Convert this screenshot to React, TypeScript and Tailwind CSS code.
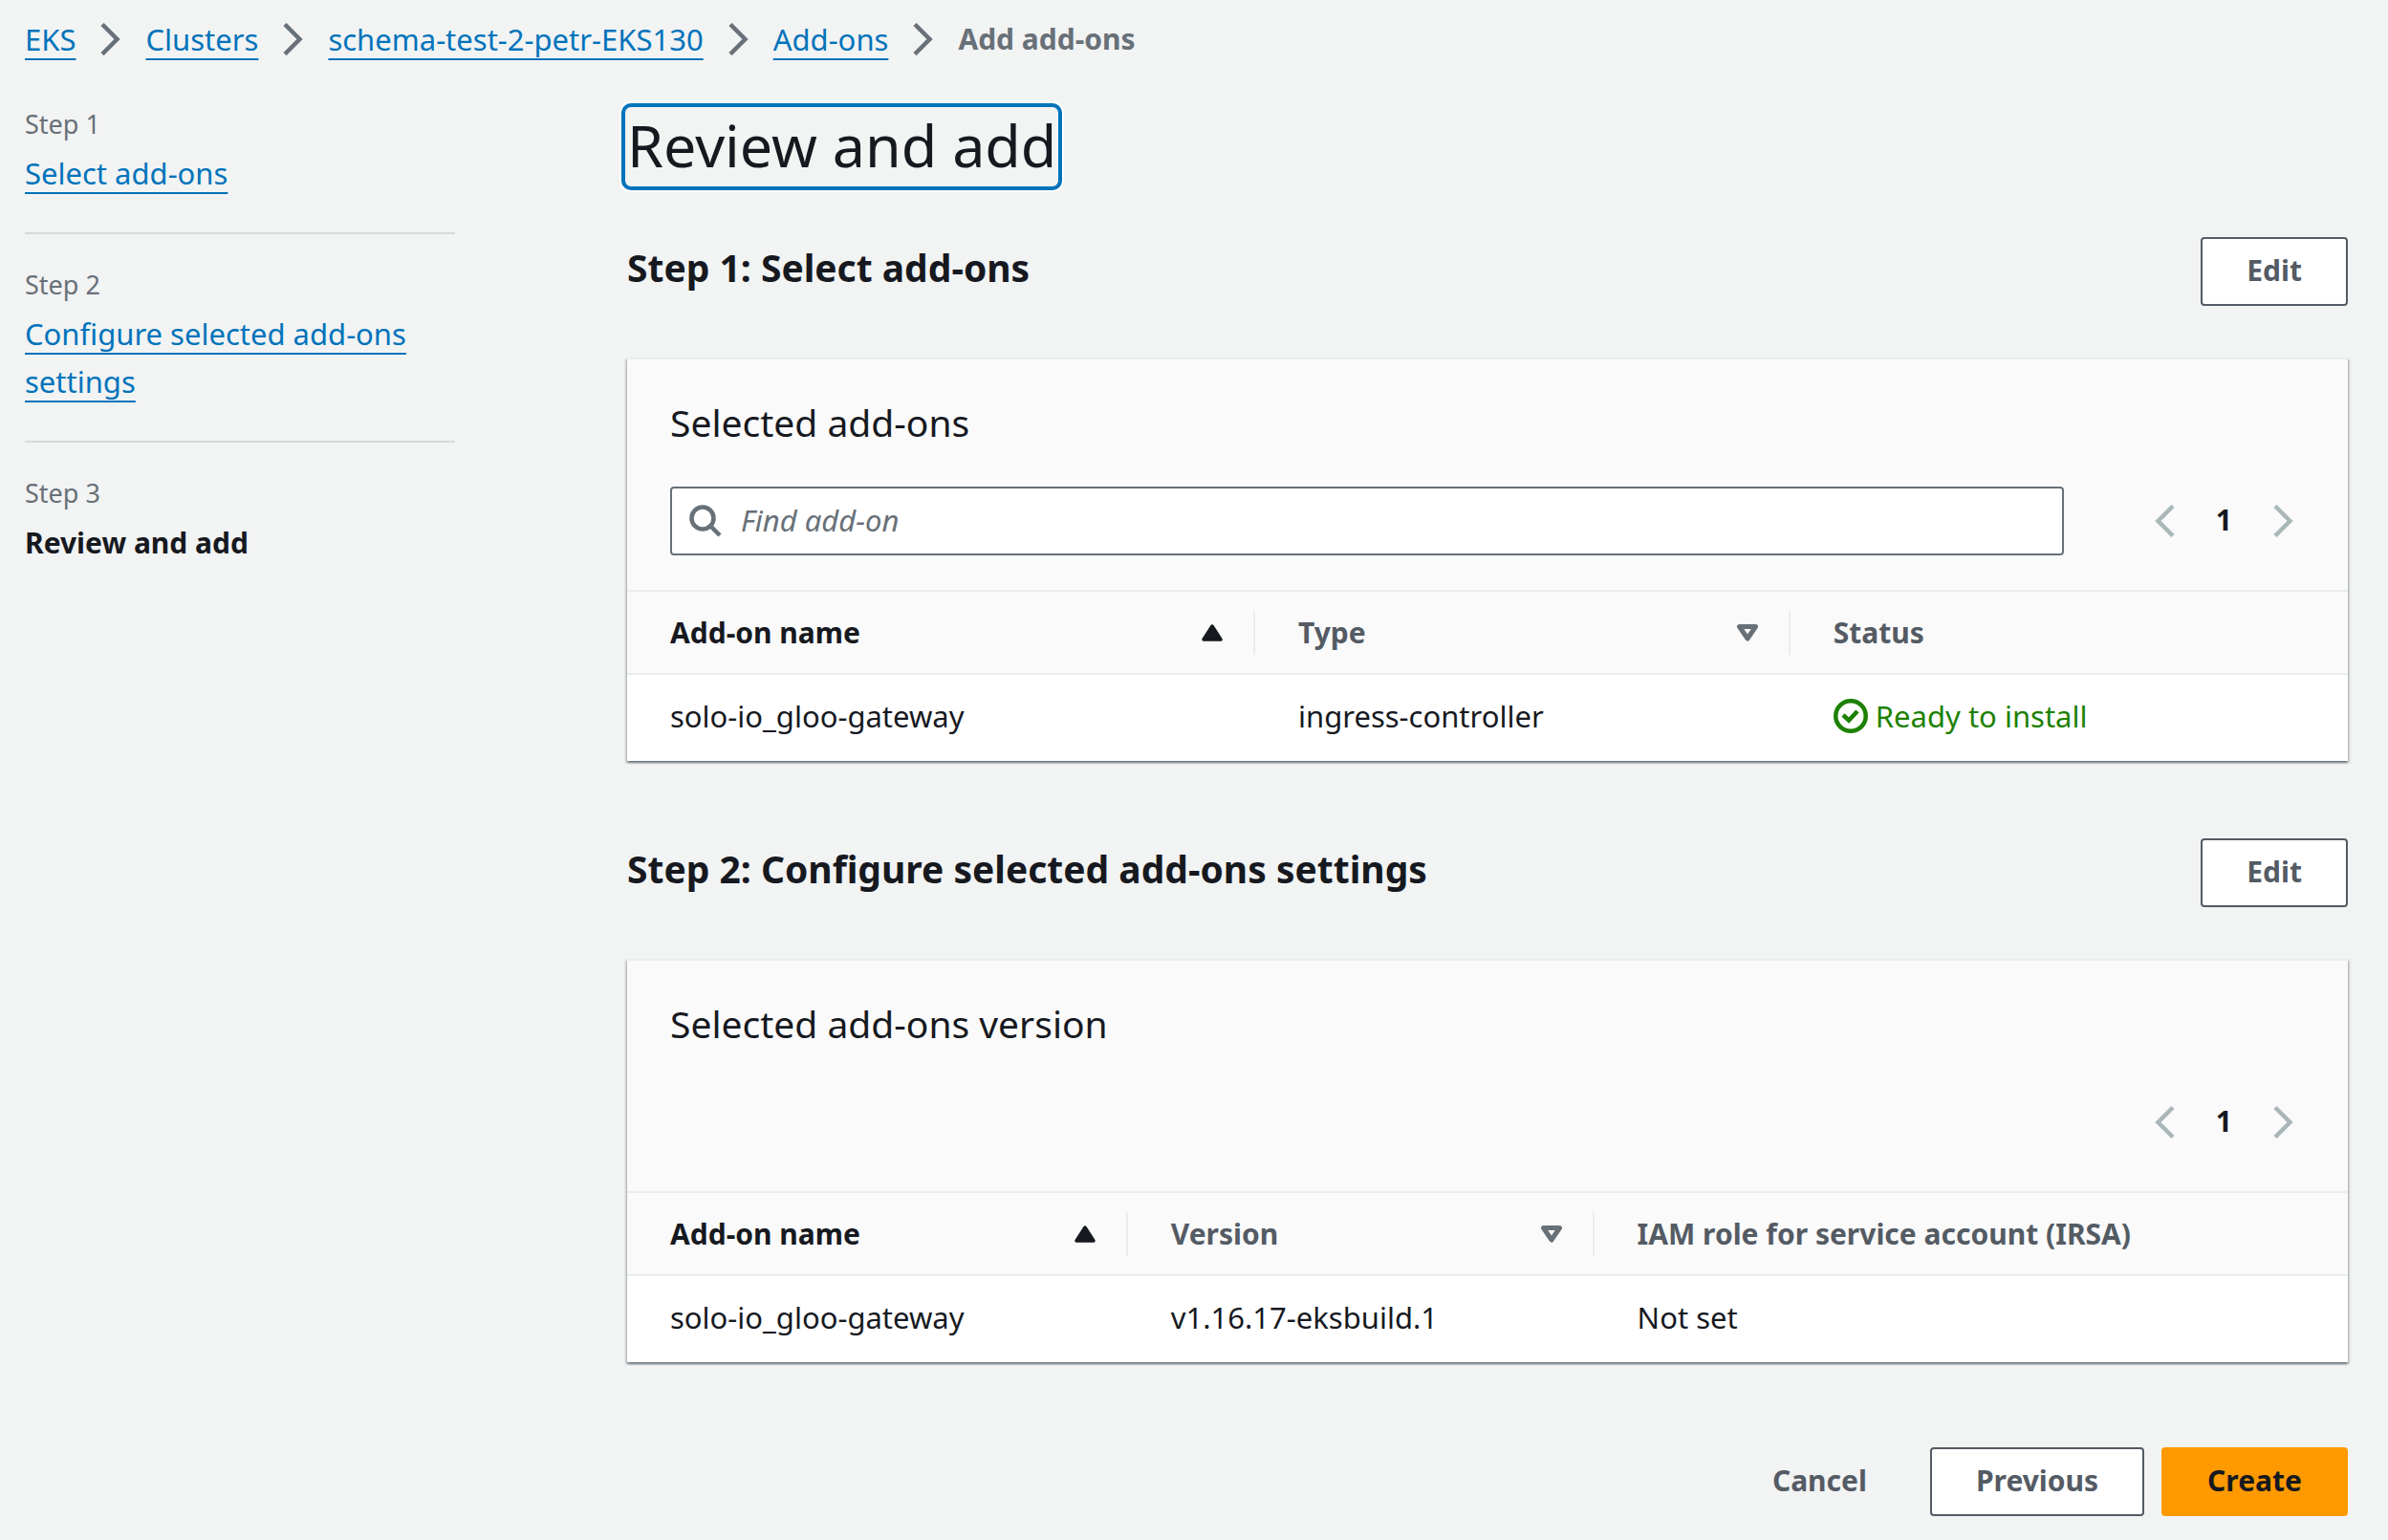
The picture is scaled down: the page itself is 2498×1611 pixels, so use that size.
import type { ReactNode } from 'react'
import { useState } from 'react'

interface Column {
  label: string
  width?: string
  sort?: 'asc' | 'none'
}

interface StepSectionProps {
  title: string
  children: ReactNode
}

interface AddonTableProps {
  title: string
  columns: Column[]
  rows: ReactNode[][]
  search?: ReactNode
}

const breadcrumbs = ['EKS', 'Clusters', 'schema-test-2-petr-EKS130', 'Add-ons']

const steps = [
  { label: 'Step 1', title: 'Select add-ons' },
  { label: 'Step 2', title: 'Configure selected add-ons settings' },
  { label: 'Step 3', title: 'Review and add', current: true },
]

const linkClass =
  'text-[#0073bb] underline decoration-2 underline-offset-8 [text-decoration-skip-ink:none]'

const ChevronRight = ({ className }: { className: string }) => (
  <svg viewBox="0 0 21 34" className={`h-[34px] w-[21px] shrink-0 ${className}`} fill="none" aria-hidden="true">
    <path d="M2 1.5 L17.5 17 L2 32.5" stroke="currentColor" strokeWidth="4.5" />
  </svg>
)

const ChevronLeft = ({ className }: { className: string }) => (
  <svg viewBox="0 0 21 34" className={`h-[34px] w-[21px] shrink-0 ${className}`} fill="none" aria-hidden="true">
    <path d="M19 1.5 L3.5 17 L19 32.5" stroke="currentColor" strokeWidth="4.5" />
  </svg>
)

const SortIcon = ({ sort }: { sort: 'asc' | 'none' }) => (
  <svg viewBox="0 0 24 20" className="h-5 w-6 shrink-0" aria-hidden="true">
    {sort === 'asc' ? (
      <path d="M12 3 L21 17 H3 Z" fill="#16191f" stroke="#16191f" strokeWidth="3.5" strokeLinejoin="round" />
    ) : (
      <path d="M3.5 3.5 H20.5 L12 16 Z" fill="none" stroke="#687078" strokeWidth="5" strokeLinejoin="round" />
    )}
  </svg>
)

const SearchIcon = () => (
  <svg viewBox="0 0 34 34" className="h-[34px] w-[34px] shrink-0 text-[#687078]" fill="none" aria-hidden="true">
    <circle cx="14" cy="14" r="11.5" stroke="currentColor" strokeWidth="4.5" />
    <path d="M22.5 22.5 L32 32" stroke="currentColor" strokeWidth="4.5" />
  </svg>
)

const SuccessIcon = () => (
  <svg viewBox="0 0 36 36" className="h-9 w-9 shrink-0" fill="none" aria-hidden="true">
    <circle cx="18" cy="18" r="15.75" stroke="currentColor" strokeWidth="4.5" />
    <path d="M10 17 L16 22.5 L25 13" stroke="currentColor" strokeWidth="4.5" />
  </svg>
)

const Button = ({ children, variant = 'normal' }: { children: ReactNode; variant?: 'normal' | 'link' | 'primary' }) => {
  const variants = {
    normal: 'border-[#545b64] bg-white text-[#545b64]',
    link: 'border-transparent text-[#545b64]',
    primary: 'border-[#ff9900] bg-[#ff9900] text-[#16191f]',
  }

  return (
    <button
      type="button"
      className={`h-[72px] shrink-0 rounded border-2 px-[46px] pb-0.5 text-[30px] font-bold ${variants[variant]}`}
    >
      {children}
    </button>
  )
}

const Pagination = () => (
  <nav aria-label="Table pages" className="flex h-[72px] shrink-0 items-center gap-[43px] px-3">
    <button type="button" aria-label="Previous page">
      <ChevronLeft className="text-[#aab7b8]" />
    </button>
    <button type="button" className="pb-0.5 text-[30px] font-bold">
      1
    </button>
    <button type="button" aria-label="Next page">
      <ChevronRight className="text-[#aab7b8]" />
    </button>
  </nav>
)

const StepSection = ({ title, children }: StepSectionProps) => (
  <section>
    <div className="mb-[54px] flex items-start justify-between">
      <h2 className="text-[39px] leading-[64px] font-bold">{title}</h2>
      <Button>Edit</Button>
    </div>
    {children}
  </section>
)

const AddonTable = ({ title, columns, rows, search }: AddonTableProps) => (
  <div className="border-t-2 border-[#eaeded] bg-white shadow-[0_2px_2px_0_rgba(0,28,36,0.4),2px_2px_2px_0_rgba(0,28,36,0.15),-2px_2px_2px_0_rgba(0,28,36,0.15)]">
    <div className="bg-[#fafafa] px-[45px] pt-10 pb-9">
      <h3 className="text-[39px] leading-[52px]">{title}</h3>
      <div className="mt-[41px] flex items-center justify-end gap-[83px]">
        {search}
        <Pagination />
      </div>
    </div>

    <table className="w-full table-fixed border-collapse text-left">
      <thead>
        <tr className="h-[87px] border-y-2 border-[#eaeded] bg-[#fafafa]">
          {columns.map((column, index) => (
            <th
              key={column.label}
              scope="col"
              className={`p-0 text-[30px] font-bold ${column.width ?? ''} ${
                column.sort === 'asc' ? '' : 'text-[#545b64]'
              }`}
            >
              <div
                className={`flex h-[46px] items-center justify-between pr-[31px] pl-[45px] ${
                  index < columns.length - 1 ? 'border-r-2 border-[#eaeded]' : ''
                }`}
              >
                {column.label}
                {column.sort && (
                  <button type="button" aria-label={`Sort by ${column.label}`}>
                    <SortIcon sort={column.sort} />
                  </button>
                )}
              </div>
            </th>
          ))}
        </tr>
      </thead>
      <tbody>
        {rows.map((row, rowIndex) => (
          <tr key={rowIndex} className="h-[91px]">
            {row.map((cell, cellIndex) => (
              <td key={cellIndex} className="pt-0 pr-8 pb-1 pl-[45px]">
                {cell}
              </td>
            ))}
          </tr>
        ))}
      </tbody>
    </table>
  </div>
)

const SearchField = () => {
  const [query, setQuery] = useState('')

  return (
    <label className="flex h-[72px] min-w-0 flex-1 items-center gap-5 rounded border-2 border-[#687078] bg-white px-[18px]">
      <SearchIcon />
      <input
        type="text"
        value={query}
        onChange={(e) => setQuery(e.target.value)}
        aria-label="Find add-on"
        placeholder="Find add-on"
        className="min-w-0 flex-1 pb-0.5 outline-none placeholder:text-[#687078] placeholder:italic"
      />
    </label>
  )
}

const App = () => {
  return (
    <div className="min-h-screen bg-[#f2f3f3] pt-4 pr-[42px] pb-6 pl-[26px] font-['Noto_Sans','Open_Sans',sans-serif] text-[31px] leading-[50px] text-[#16191f]">
      {/* Breadcrumbs */}
      <nav aria-label="Breadcrumbs">
        <ol className="flex items-center gap-[26px]">
          {breadcrumbs.map((crumb) => (
            <li key={crumb} className="flex items-center gap-[26px]">
              <a href="#" className={linkClass}>
                {crumb}
              </a>
              <ChevronRight className="text-[#687078]" />
            </li>
          ))}
          <li className="text-[30px] font-bold text-[#687078]">Add add-ons</li>
        </ol>
      </nav>

      <div className="mt-[42px] grid grid-cols-[450px_minmax(0,1fr)] gap-x-[180px]">
        {/* Wizard steps */}
        <nav aria-label="Steps" className="pt-0.5">
          <ol>
            {steps.map((step) => (
              <li key={step.label} className="mb-[33px] border-b-2 border-[#d5dbdb] pb-[37px] last:border-b-0">
                <div className="mb-1.5 text-[27px] leading-10 text-[#687078]">{step.label}</div>
                {step.current ? (
                  <span className="text-[30px] font-bold">{step.title}</span>
                ) : (
                  <a href="#" className={linkClass}>
                    {step.title}
                  </a>
                )}
              </li>
            ))}
          </ol>
        </nav>

        <main>
          <h1 className="-ml-1.5 w-fit rounded-[10px] border-4 border-[#0073bb] px-0.5 pb-1 text-[61px] leading-[79px] ring-2 ring-white">
            Review and add
          </h1>

          <div className="mt-[49px] flex flex-col gap-[81px]">
            <StepSection title="Step 1: Select add-ons">
              <AddonTable
                title="Selected add-ons"
                search={<SearchField />}
                columns={[
                  { label: 'Add-on name', width: 'w-[36.5%]', sort: 'asc' },
                  { label: 'Type', width: 'w-[31.1%]', sort: 'none' },
                  { label: 'Status' },
                ]}
                rows={[
                  [
                    'solo-io_gloo-gateway',
                    'ingress-controller',
                    <span className="flex items-center gap-2 text-[#1d8102]">
                      <SuccessIcon />
                      Ready to install
                    </span>,
                  ],
                ]}
              />
            </StepSection>

            <StepSection title="Step 2: Configure selected add-ons settings">
              <AddonTable
                title="Selected add-ons version"
                columns={[
                  { label: 'Add-on name', width: 'w-[29.1%]', sort: 'asc' },
                  { label: 'Version', width: 'w-[27.1%]', sort: 'none' },
                  { label: 'IAM role for service account (IRSA)' },
                ]}
                rows={[['solo-io_gloo-gateway', 'v1.16.17-eksbuild.1', 'Not set']]}
              />
            </StepSection>
          </div>

          <div className="mt-[89px] flex justify-end gap-[18px]">
            <Button variant="link">Cancel</Button>
            <Button>Previous</Button>
            <Button variant="primary">Create</Button>
          </div>
        </main>
      </div>
    </div>
  )
}

export default App
